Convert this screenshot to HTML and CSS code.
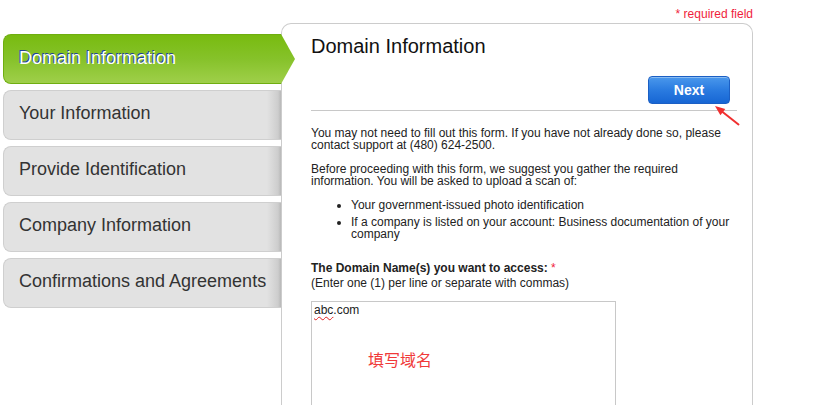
FILE: index.html
```html
<!DOCTYPE html>
<html>
<head>
<meta charset="utf-8">
<link rel="stylesheet" href="styles.css">
</head>
<body>
<div class="page">
  <div class="top"><span class="req">* required field</span></div>
  <div class="main">
    <nav class="steps">
      <div class="step active">Domain Information</div>
      <div class="step">Your Information</div>
      <div class="step">Provide Identification</div>
      <div class="step">Company Information</div>
      <div class="step">Confirmations and Agreements</div>
    </nav>
    <section class="panel">
      <h1 class="title">Domain Information</h1>
      <div class="actions"><button class="next">Next</button></div>
      <hr class="rule">
      <svg class="pointer" width="32" height="26" viewBox="0 0 32 26">
        <line x1="12" y1="9.5" x2="28.5" y2="22.5" stroke="#f03030" stroke-width="2" stroke-linecap="round"/>
        <polygon points="5,4 15.3,7 10.4,13.3" fill="#f03030"/>
      </svg>
      <div class="content">
        <p>You may not need to fill out this form. If you have not already done so, please contact support at (480) 624-2500.</p>
        <p>Before proceeding with this form, we suggest you gather the required information. You will be asked to upload a scan of:</p>
        <ul class="list">
          <li>Your government-issued photo identification</li>
          <li>If a company is listed on your account: Business documentation of your company</li>
        </ul>
        <div class="label">The Domain Name(s) you want to access: <span class="star">*</span></div>
        <div class="hint">(Enter one (1) per line or separate with commas)</div>
        <div class="textarea"><span class="typo">abc</span>.com<span class="note">填写域名</span></div>
      </div>
    </section>
  </div>
</div>
</body>
</html>
```

FILE: styles.css
```css
html, body {
  margin: 0;
  padding: 0;
  background: #fff;
}
body {
  font-family: "Liberation Sans", Arial, sans-serif;
  color: #222;
}
.page {
  width: 750px;
  padding-left: 3px;
}
.top {
  height: 23px;
  box-sizing: border-box;
  padding-top: 8px;
  text-align: right;
  font-size: 12px;
  line-height: 12px;
}
.req {
  color: #f01e3c;
}
.main {
  display: flex;
  align-items: flex-start;
}
.steps {
  width: 278px;
  flex: none;
  margin-top: 11px;
  display: flex;
  flex-direction: column;
  gap: 6px;
  position: relative;
  z-index: 1;
}
.step {
  height: 50px;
  box-sizing: border-box;
  border: 1px solid #cfcfcf;
  border-right: none;
  border-radius: 8px 0 0 8px;
  padding: 0 0 4px 15px;
  font-size: 18px;
  line-height: 44px;
  color: #333;
  background: linear-gradient(to right, #e2e2e2 0, #e2e2e2 calc(100% - 14px), #cdcdcd calc(100% - 3px), #b8b8b8 100%);
  white-space: nowrap;
}
.step.active {
  margin-right: -14px;
  border: 1px solid #6fae10;
  border-right: none;
  background: linear-gradient(to bottom, #78bb10 0%, #86c22a 50%, #9fcf4a 100%);
  color: #fff;
  text-shadow: -1px -1px 0 #20409a;
  clip-path: polygon(0 0, 278px 0, 100% 50%, 278px 100%, 0 100%);
  padding-bottom: 2px;
  line-height: 46px;
}
.panel {
  width: 472px;
  flex: none;
  box-sizing: border-box;
  min-height: 390px;
  border: 1px solid #cccccc;
  border-bottom: none;
  border-radius: 10px 10px 0 0;
  padding: 10px 15px 0 29px;
  position: relative;
  background: #fff;
}
.title {
  margin: 0;
  font-size: 20px;
  line-height: 24px;
  font-weight: normal;
  color: #111;
}
.actions {
  display: flex;
  justify-content: flex-end;
  margin-top: 18px;
  padding-right: 7px;
}
.next {
  width: 82px;
  height: 28px;
  box-sizing: border-box;
  border: 1px solid #1b5fc4;
  border-radius: 4px;
  background: linear-gradient(to bottom, #4a98ec 0%, #2a7be0 50%, #1766d4 100%);
  color: #fff;
  font-family: "Liberation Sans", Arial, sans-serif;
  font-weight: bold;
  font-size: 14px;
  padding: 0;
  box-shadow: inset 0 1px 0 rgba(255,255,255,0.35);
}
.rule {
  margin: 6px 0 0;
  border: 0;
  border-top: 1px solid #c8c8c8;
  height: 0;
}
.pointer {
  position: absolute;
  left: 428px;
  top: 78px;
}
.content {
  margin-top: 16px;
  font-size: 12px;
  line-height: 12px;
}
.content p {
  margin: 0 0 12px;
}
.list {
  margin: 0 0 22px;
  padding-left: 40px;
}
.list li {
  margin-bottom: 5px;
}
.list li:last-child {
  margin-bottom: 0;
}
.label {
  font-weight: bold;
}
.star {
  color: #f01e3c;
  font-weight: normal;
}
.hint {
  margin-top: 3px;
}
.textarea {
  position: relative;
  margin-top: 12px;
  width: 305px;
  height: 120px;
  box-sizing: border-box;
  border: 1px solid #c8c8c8;
  padding: 2px 2px 1px;
  font-size: 12px;
  line-height: 13px;
  color: #222;
}
.typo {
  text-decoration: underline wavy #e02020;
  text-decoration-thickness: 1px;
  text-underline-offset: 2px;
}
.note {
  position: absolute;
  left: 56px;
  top: 47px;
  font-family: "Noto Sans CJK SC", sans-serif;
  font-size: 16px;
  line-height: 20px;
  color: #f03a3a;
}
```
